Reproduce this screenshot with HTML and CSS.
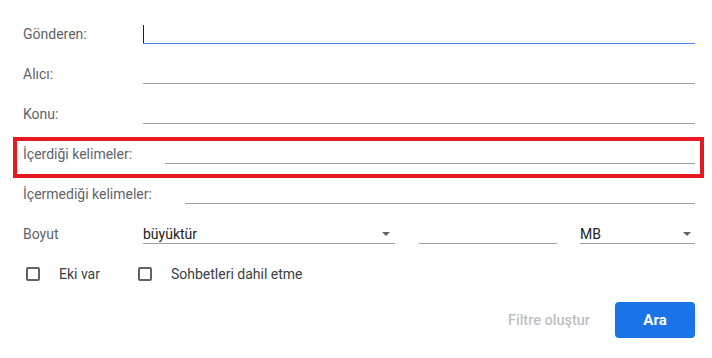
FILE: index.html
```html
<!DOCTYPE html>
<html lang="tr">
<head>
    <meta charset="UTF-8">
    <meta name="viewport" content="width=device-width, initial-scale=1.0">
    <title>Arama seçenekleri</title>
    <link rel="stylesheet" href="styles.css">
</head>
<body>
    <form class="search-form">
        <div class="row">
            <label class="label">Gönderen:</label>
            <div class="field active"><input type="text" class="text-input"></div>
        </div>
        <div class="row">
            <label class="label">Alıcı:</label>
            <div class="field"><input type="text" class="text-input"></div>
        </div>
        <div class="row">
            <label class="label">Konu:</label>
            <div class="field"><input type="text" class="text-input"></div>
        </div>
        <div class="row highlighted">
            <label class="label">İçerdiği kelimeler:</label>
            <div class="field"><input type="text" class="text-input"></div>
        </div>
        <div class="row">
            <label class="label">İçermediği kelimeler:</label>
            <div class="field"><input type="text" class="text-input"></div>
        </div>
        <div class="row">
            <label class="label">Boyut</label>
            <div class="select size-op">büyüktür<span class="arrow"></span></div>
            <input type="text" class="text-input size-value">
            <div class="select size-unit">MB<span class="arrow"></span></div>
        </div>

        <div class="check-row">
            <label class="check"><span class="box"></span>Eki var</label>
            <label class="check"><span class="box"></span>Sohbetleri dahil etme</label>
        </div>

        <div class="actions">
            <button type="button" class="btn-text" disabled>Filtre oluştur</button>
            <button type="button" class="btn-primary">Ara</button>
        </div>
    </form>
</body>
</html>
```

FILE: styles.css
```css
body {
    margin: 0;
    background-color: #fff;
    font-family: Roboto, 'Liberation Sans', sans-serif;
}

.search-form {
    padding: 14px 17px 0 23px;
}

.row {
    position: relative;
    display: flex;
    align-items: center;
    height: 40px;
}

.label {
    flex: 0 0 auto;
    min-width: 87px;
    padding-right: 33px;
    font-size: 14px;
    color: #5f6368;
}

.field {
    position: relative;
    flex: 1;
}

.text-input {
    display: block;
    width: 100%;
    height: 20px;
    box-sizing: border-box;
    padding: 0;
    border: none;
    border-bottom: 1px solid #9e9e9e;
    outline: none;
    background: transparent;
    font-family: inherit;
    font-size: 14px;
}

.field.active .text-input {
    border-bottom-color: #4a86e8;
}

/* blinking caret, frozen */
.field.active::before {
    content: '';
    position: absolute;
    left: 0;
    top: 1px;
    width: 1px;
    height: 18px;
    background-color: #202124;
}

/* annotation frame */
.row.highlighted::after {
    content: '';
    position: absolute;
    left: -10px;
    right: -9px;
    top: 3px;
    bottom: -4px;
    border: 4px solid #e5191f;
    pointer-events: none;
}

.select {
    display: flex;
    align-items: center;
    height: 20px;
    box-sizing: border-box;
    border-bottom: 1px solid #9e9e9e;
    font-size: 14px;
    color: #202124;
}

.arrow {
    margin-left: auto;
    margin-right: 5px;
    border-left: 4px solid transparent;
    border-right: 4px solid transparent;
    border-top: 4px solid #5f6368;
}

.size-op {
    width: 252px;
    margin-right: 24px;
}

.size-value {
    width: 138px;
    margin-right: 23px;
}

.size-unit {
    flex: 1;
}

.size-unit .arrow {
    margin-right: 4px;
}

.check-row {
    display: flex;
    align-items: center;
    height: 40px;
    padding-left: 3px;
}

.check {
    display: flex;
    align-items: center;
    gap: 19px;
    margin-right: 38px;
    font-size: 14px;
    color: #3c4043;
}

.box {
    width: 14px;
    height: 14px;
    box-sizing: border-box;
    border: 2px solid #5f6368;
    border-radius: 2px;
}

.actions {
    display: flex;
    justify-content: flex-end;
    align-items: center;
    margin-top: 8px;
}

.btn-text {
    margin-right: 25px;
    padding: 0;
    border: none;
    background: none;
    font-family: inherit;
    font-size: 14.5px;
    font-weight: 500;
    color: #bdc1c6;
}

.btn-primary {
    width: 80px;
    height: 36px;
    border: none;
    border-radius: 4px;
    background-color: #1a73e8;
    color: #fff;
    font-family: inherit;
    font-size: 15px;
    font-weight: 700;
    cursor: pointer;
}
```
